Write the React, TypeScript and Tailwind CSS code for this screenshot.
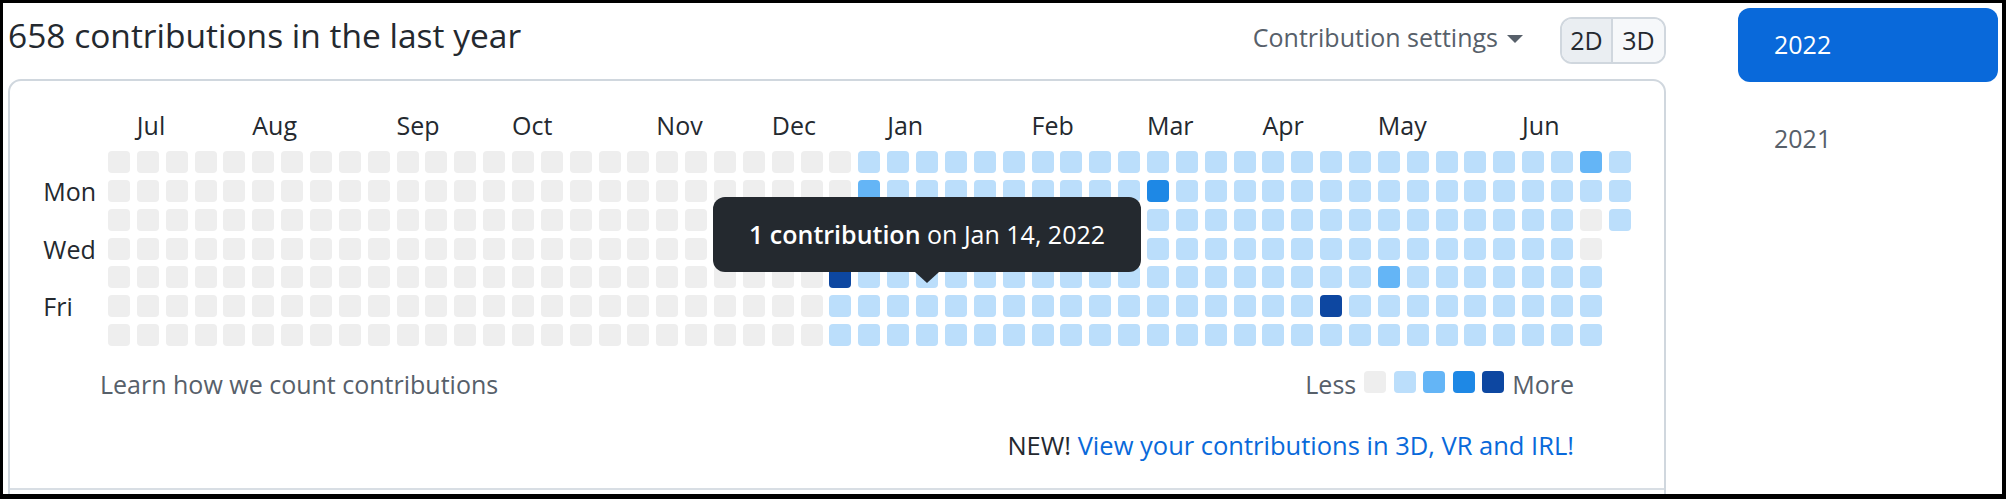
import React from 'react';

const LEVELS = ['bg-[#eeeeee]', 'bg-[#bbdefb]', 'bg-[#64b5f6]', 'bg-[#1e88e5]', 'bg-[#0d47a1]'];

const MONTHS: Record<number, string> = {
  1: 'Jul',
  5: 'Aug',
  10: 'Sep',
  14: 'Oct',
  19: 'Nov',
  23: 'Dec',
  27: 'Jan',
  32: 'Feb',
  36: 'Mar',
  40: 'Apr',
  44: 'May',
  49: 'Jun',
};

// odd days that stand out from the plain light-blue / gray fill
const SPECIAL: Record<string, number> = {
  '26-1': 2,
  '36-1': 3,
  '25-4': 4,
  '44-4': 2,
  '42-5': 4,
  '51-0': 2,
  '51-2': 0,
  '51-3': 0,
};

const DAYS = ['', 'Mon', '', 'Wed', '', 'Fri', ''];

function levelAt(col: number, row: number): number | null {
  if (col === 52 && row > 2) return null;
  const key = `${col}-${row}`;
  if (key in SPECIAL) return SPECIAL[key];
  const start = row >= 4 ? 25 : 26;
  return col >= start ? 1 : 0;
}

function Tooltip() {
  return (
    <div className="absolute bottom-[calc(100%+23px)] left-1/2 z-10 flex h-[75px] w-[428px] -translate-x-1/2 items-center justify-center rounded-[12px] bg-[#24292f] text-[25px] whitespace-nowrap text-white">
      <span>
        <strong className="font-semibold">1 contribution</strong> on Jan 14, 2022
      </span>
      <span className="absolute top-full left-1/2 -translate-x-1/2 border-x-[12px] border-t-[11px] border-x-transparent border-t-[#24292f]" />
    </div>
  );
}

function Calendar() {
  const cols = Array.from({ length: 53 }, (_, i) => i);
  return (
    <div className="flex">
      <div className="flex w-[64.7px] flex-col">
        <div className="h-[30px]" />
        <div className="mt-[11px] flex flex-col gap-[6.86px]">
          {DAYS.map((d, i) => (
            <div key={i} className="h-[22px] text-[25px] leading-[22px] text-[#24292f]">
              {d}
            </div>
          ))}
        </div>
      </div>
      <div className="flex gap-[6.86px]">
        {cols.map((c) => (
          <div key={c} className="flex w-[22px] flex-col">
            <div className="h-[30px] text-[25px] leading-[30px] whitespace-nowrap text-[#24292f]">
              {MONTHS[c] ?? ''}
            </div>
            <div className="mt-[11px] flex flex-col gap-[6.86px]">
              {DAYS.map((_, r) => {
                const lvl = levelAt(c, r);
                if (lvl === null) return <div key={r} className="h-[22px] w-[22px]" />;
                return (
                  <div key={r} className={`relative h-[22px] w-[22px] rounded-[4px] ${LEVELS[lvl]}`}>
                    {c === 28 && r === 5 && <Tooltip />}
                  </div>
                );
              })}
            </div>
          </div>
        ))}
      </div>
    </div>
  );
}

export default function App() {
  return (
    <div className="box-border flex h-[499px] w-[2006px] overflow-hidden border-t-[3px] border-r-[4px] border-b-[5px] border-l-[3px] border-black bg-white font-['Open_Sans',sans-serif]">
      <div className="ml-[5px] flex w-[1658px] shrink-0 flex-col">
        <div className="flex h-[76px] shrink-0 items-start">
          <h2 className="mt-[7px] text-[33.5px] leading-[50px] font-normal text-[#24292f]">
            658 contributions in the last year
          </h2>
          <div className="mt-[14px] ml-auto flex items-center">
            <span className="mb-[5px] text-[25px] text-[#57606a]">Contribution settings</span>
            <span className="mb-[3px] ml-[9px] border-x-[8px] border-t-[8px] border-x-transparent border-t-[#57606a]" />
            <div className="ml-[37px] flex h-[47px] overflow-hidden rounded-[12px] border-2 border-[#d0d7de] text-[25px] text-[#24292f]">
              <div className="flex w-[51px] items-center justify-center border-r-2 border-[#d0d7de] bg-[#eaeef2]">2D</div>
              <div className="flex w-[51px] items-center justify-center bg-[#f6f8fa]">3D</div>
            </div>
          </div>
        </div>
        <div className="flex h-[440px] shrink-0 flex-col items-center rounded-t-[13px] border-2 border-[#d0d7de] pt-[29px]">
          <Calendar />
          <div className="mt-[24px] flex h-[30px] w-[1474px] items-center justify-between text-[25px] text-[#57606a]">
            <span>Learn how we count contributions</span>
            <div className="flex items-center gap-[7.5px]">
              <span className="mr-[0.5px]">Less</span>
              {LEVELS.map((bg) => (
                <span key={bg} className={`mb-[6px] h-[22px] w-[22px] rounded-[4px] ${bg}`} />
              ))}
              <span className="ml-[0.5px]">More</span>
            </div>
          </div>
          <div className="mt-[30px] flex h-[30px] w-[1474px] items-center justify-end text-[25.5px] text-[#24292f]">
            <span>
              NEW! <a className="text-[#0969da]">View your contributions in 3D, VR and IRL!</a>
            </span>
          </div>
          <div className="mt-[28px] w-full border-t-2 border-[#d8dee4]" />
        </div>
      </div>
      <div className="ml-[72px] flex w-[260px] shrink-0 flex-col">
        <div className="mt-[5px] flex h-[74px] items-center rounded-[12px] bg-[#0969da] pl-[36px] text-[25px] text-white">
          2022
        </div>
        <div className="mt-[20px] flex h-[74px] items-center pl-[36px] text-[25px] text-[#57606a]">2021</div>
      </div>
    </div>
  );
}
